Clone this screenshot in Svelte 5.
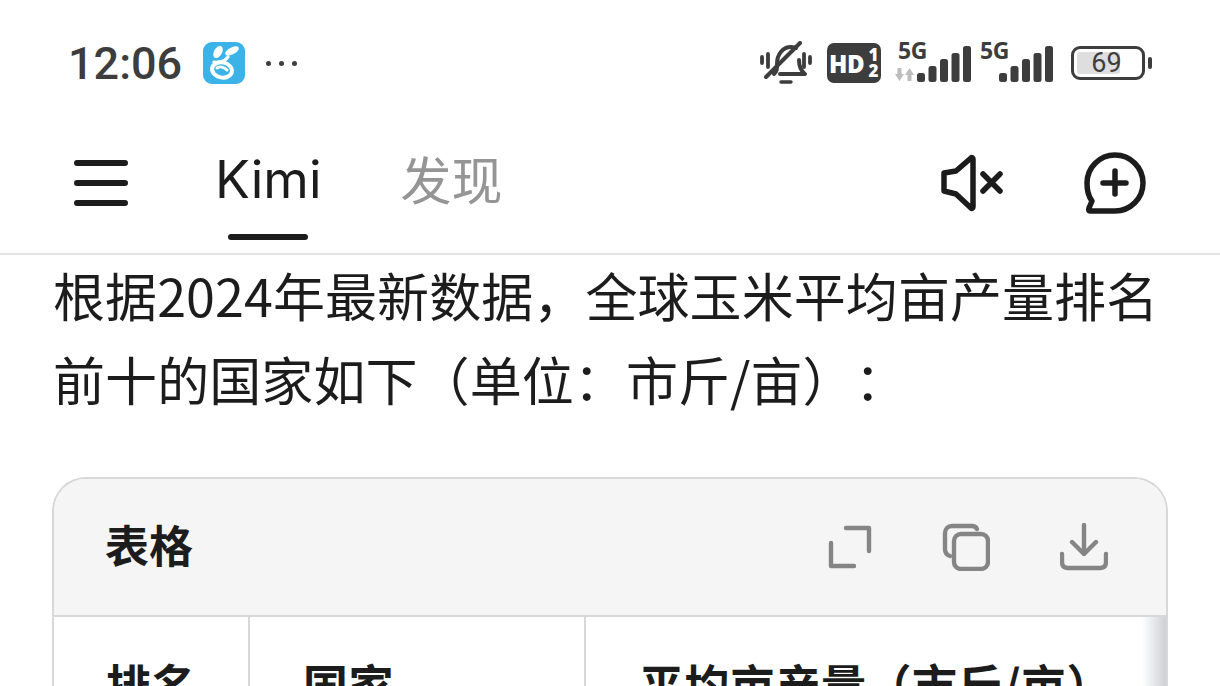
<script>
    let paragraph = ['根据2024年最新数据，全球玉米平均亩产量排名', '前十的国家如下（单位：市斤/亩）：'];
    let bars = [
        [0, 27],
        [11.5, 20],
        [23, 13],
        [34.5, 7],
        [46, 0],
    ];
</script>

{#snippet signal()}
    <svg class="signal" width="74" height="42" viewBox="0 0 74 42">
        <text x="0" y="17" class="five-g">5G</text>
        {#each bars as b}
            <rect x={b[0] + 19} y={b[1] + 4} width="8" height={36 - b[1]} rx="2.5" fill="#3d3d3d" />
        {/each}
    </svg>
{/snippet}

<div class="screen">
    <header class="status">
        <div class="status-left">
            <span class="time">12:06</span>
            <svg class="app-icon" width="42" height="42" viewBox="0 0 42 42">
                <rect width="42" height="42" rx="9" fill="#3bb3e8" />
                <ellipse cx="15" cy="10" rx="4" ry="6.5" transform="rotate(30 15 10)" fill="#fff" />
                <ellipse cx="29" cy="9" rx="3.5" ry="7.5" transform="rotate(62 29 9)" fill="#fff" />
                <path d="M11 20c6 1 11-1 14-5" fill="none" stroke="#fff" stroke-width="3.2" stroke-linecap="round" />
                <ellipse cx="19" cy="28" rx="10" ry="7.5" transform="rotate(12 19 28)" fill="none" stroke="#fff" stroke-width="4" />
                <path d="M14 26c3-2 7-1 10 2" fill="none" stroke="#fff" stroke-width="3" stroke-linecap="round" />
            </svg>
            <span class="dots"><i></i><i></i><i></i></span>
        </div>
        <div class="status-right">
            <svg width="52" height="44" viewBox="0 0 52 44" fill="none" stroke="#3d3d3d" stroke-linecap="round" stroke-linejoin="round">
                <path d="M2 16v6M8 13v13M44 13v13M50 16v6" stroke-width="3.8" />
                <path d="M14 33c3-2 3-5 3-10 0-10 6-17 14-17 2 0 4 0 5 1M39 19c0 6 2 11 6 14H20" stroke-width="4" />
                <path d="M40 2 6 36" stroke-width="4" />
                <path d="M21 41h10" stroke-width="3.4" />
            </svg>
            <span class="hd">HD<span class="hd-num"><b>1</b><b>2</b></span></span>
            <span class="sim">
                {@render signal()}
                <svg class="arrows" width="19" height="13" viewBox="0 0 19 13">
                    <path d="M0 6h2.500V0h4v6H9l-4.500 7ZM10 7l4.500-7L19 7h-2.500v6h-4V7Z" fill="#bdbdbd" />
                </svg>
            </span>
            <span class="sim second">{@render signal()}</span>
            <span class="battery">
                <span class="battery-body">
                    <span class="battery-fill"></span>
                    <span class="battery-num">69</span>
                </span>
                <span class="battery-cap"></span>
            </span>
        </div>
    </header>

    <nav class="navbar">
        <svg class="menu" width="54" height="48" viewBox="0 0 54 48" stroke="#1c1c1c" stroke-width="6" stroke-linecap="round">
            <path d="M3 4h48M3 24h48M3 44h48" />
        </svg>
        <div class="tabs">
            <span class="tab active">Kimi</span>
            <span class="tab">发现</span>
        </div>
        <div class="nav-actions">
            <svg width="64" height="60" viewBox="0 0 64 60" fill="none" stroke="#1c1c1c" stroke-width="5.500" stroke-linecap="round" stroke-linejoin="round">
                <path d="M3 20v18l12 3 15 14c1 1 2 0 2-1V6c0-1-1-2-2-1L15 18Z" />
                <path d="M42 21l17 17M59 21 42 38" />
            </svg>
            <svg width="62" height="62" viewBox="0 0 62 62" fill="none" stroke="#1c1c1c" stroke-width="5.500" stroke-linecap="round" stroke-linejoin="round">
                <path d="M31 3a28 28 0 0 1 0 56H6c-1 0-2-1-1-3l3-7C4 44 3 37 3 31A28 28 0 0 1 31 3Z" />
                <path d="M31 19v23M19 31h23" />
            </svg>
        </div>
    </nav>

    <main class="main">
        {#each paragraph as line}
            <p>{line}</p>
        {/each}

        <section class="card">
            <div class="card-head">
                <strong>表格</strong>
                <div class="card-actions">
                    <svg width="44" height="44" viewBox="0 0 44 44" fill="none" stroke="#858585" stroke-width="4.400" stroke-linecap="round" stroke-linejoin="round">
                        <path d="M18 3h23v23M3 18v23h23" />
                    </svg>
                    <svg width="48" height="48" viewBox="0 0 48 48" fill="none" stroke="#858585" stroke-width="4.400" stroke-linecap="round" stroke-linejoin="round">
                        <rect x="12" y="11" width="34" height="35" rx="7" />
                        <path d="M8 33c-3-1-5-3-5-7V10c0-4 3-7 7-7h20c3 0 4 1 5 3" />
                    </svg>
                    <svg width="48" height="48" viewBox="0 0 48 48" fill="none" stroke="#858585" stroke-width="4.400" stroke-linecap="round" stroke-linejoin="round">
                        <path d="M24 2v29M12 19l12 12 12-12" />
                        <path d="M2 31v8c0 4 2 6 6 6h32c4 0 6-2 6-6v-8" />
                    </svg>
                </div>
            </div>
            <div class="table-wrap">
                <table>
                    <thead>
                        <tr>
                            <th class="rank">排名</th>
                            <th class="country">国家</th>
                            <th class="yield">平均亩产量（市斤/亩）</th>
                        </tr>
                    </thead>
                </table>
                <div class="scroll-shade"></div>
            </div>
        </section>
    </main>
</div>

<style>
    :global(html),
    :global(body) {
        margin: 0;
        height: 686px;
        overflow: hidden;
        background: #fff;
    }

    .screen {
        width: 1220px;
        height: 686px;
        overflow: hidden;
        font-family: "Noto Sans CJK SC", "Noto Sans", sans-serif;
        color: #1c1c1c;
        text-spacing-trim: space-all;
    }

    .status {
        height: 126px;
        box-sizing: border-box;
        padding: 0 68px 0 68px;
        display: flex;
        align-items: center;
        justify-content: space-between;
    }

    .status-left {
        display: flex;
        align-items: center;
    }

    .time {
        font-family: Roboto, sans-serif;
        font-size: 45px;
        font-weight: 500;
        color: #3d3d3d;
        width: 135px;
    }

    .dots {
        display: flex;
        gap: 8px;
        margin-left: 21px;
    }

    .dots i {
        width: 5px;
        height: 5px;
        border-radius: 50%;
        background: #3d3d3d;
    }

    .status-right {
        display: flex;
        align-items: center;
    }

    .hd {
        margin-left: 15px;
        width: 54px;
        height: 40px;
        border-radius: 7px;
        background: #3d3d3d;
        color: #fff;
        font-family: "Open Sans", sans-serif;
        font-weight: 800;
        font-size: 24px;
        letter-spacing: -0.5px;
        display: flex;
        align-items: center;
        justify-content: space-between;
        padding: 0 3px 0 2px;
        box-sizing: border-box;
    }

    .hd-num {
        display: flex;
        flex-direction: column;
        font-size: 17px;
        line-height: 16px;
    }

    .hd-num b {
        font-weight: 800;
    }

    .sim {
        position: relative;
        margin-left: 17px;
        display: flex;
    }

    .sim.second {
        margin-left: 8px;
    }

    .signal {
        display: block;
    }

    .five-g {
        font-family: "Open Sans", sans-serif;
        font-weight: 700;
        font-size: 23px;
        letter-spacing: -0.5px;
        fill: #3d3d3d;
    }

    .arrows {
        position: absolute;
        left: -3px;
        top: 26px;
    }

    .battery {
        margin-left: 17px;
        display: flex;
        align-items: center;
        gap: 3px;
    }

    .battery-body {
        position: relative;
        width: 74px;
        height: 34px;
        box-sizing: border-box;
        border: 3.5px solid #3d3d3d;
        border-radius: 9px;
        padding: 3px;
        display: flex;
    }

    .battery-fill {
        width: 69%;
        background: #dedede;
        border-radius: 3px;
    }

    .battery-num {
        position: absolute;
        inset: 0;
        display: flex;
        align-items: center;
        justify-content: center;
        padding-right: 3px;
        font-family: Roboto, sans-serif;
        font-size: 27px;
        color: #3d3d3d;
    }

    .battery-cap {
        width: 4px;
        height: 12px;
        border-radius: 2px;
        background: #3d3d3d;
    }

    .navbar {
        height: 129px;
        box-sizing: border-box;
        border-bottom: 2px solid #e3e3e3;
        padding: 0 74px 14px 74px;
        display: flex;
        align-items: center;
    }

    .tabs {
        display: flex;
        align-items: center;
        margin-left: 87px;
        gap: 79px;
        margin-bottom: 10px;
    }

    .tab {
        position: relative;
        font-family: "Noto Sans CJK SC", sans-serif;
        font-size: 51px;
        line-height: 60px;
        color: #959595;
    }

    .tab.active {
        font-family: Inter, sans-serif;
        font-size: 52px;
        padding-top: 4px;
        color: #1c1c1c;
    }

    .tab.active::after {
        content: "";
        position: absolute;
        left: 13px;
        right: 14px;
        bottom: -30px;
        height: 6px;
        border-radius: 3px;
        background: #1c1c1c;
    }

    .nav-actions {
        margin-left: auto;
        display: flex;
        align-items: center;
        gap: 79px;
    }

    .main {
        padding: 0 52px;
    }

    .main p {
        margin: 0 0 4px 1px;
        font-size: 52px;
        letter-spacing: 0.08px;
        line-height: 80px;
        white-space: nowrap;
        color: #1c1c1c;
    }

    .card {
        margin-top: 58px;
        border: 2px solid #d8d8d8;
        border-bottom: none;
        border-radius: 34px 34px 0 0;
        overflow: hidden;
    }

    .card-head {
        height: 138px;
        box-sizing: border-box;
        background: #f5f5f5;
        border-bottom: 2px solid #d8d8d8;
        padding: 0 58px 0 51px;
        display: flex;
        align-items: center;
        justify-content: space-between;
    }

    .card-head strong {
        font-size: 44px;
        font-weight: 700;
        margin-bottom: 7px;
    }

    .card-actions {
        display: flex;
        align-items: center;
        gap: 70px;
    }

    .table-wrap {
        position: relative;
    }

    table {
        border-collapse: collapse;
        width: 100%;
        table-layout: fixed;
    }

    th {
        height: 120px;
        text-align: left;
        vertical-align: top;
        padding: 37px 0 0 53px;
        font-size: 45px;
        letter-spacing: 0.5px;
        font-weight: 700;
        line-height: 60px;
        border-left: 2px solid #d8d8d8;
        white-space: nowrap;
    }

    th:first-child {
        border-left: none;
    }

    .rank {
        width: 142px;
        padding-left: 52px;
        box-sizing: content-box;
    }

    .country {
        width: 281px;
    }

    .yield {
        padding-left: 53px;
    }

    .scroll-shade {
        position: absolute;
        top: 0;
        right: 0;
        bottom: 0;
        width: 24px;
        background: linear-gradient(to right, rgba(200, 203, 208, 0), rgba(200, 203, 208, 0.9));
    }
</style>
